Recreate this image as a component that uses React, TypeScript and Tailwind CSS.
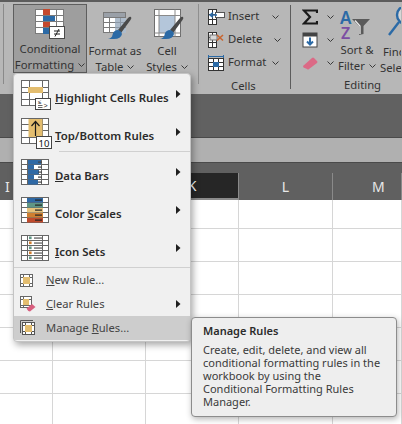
import type { ReactNode } from 'react'

const FONT = "font-['Noto_Sans','Open_Sans',sans-serif]"
const LINE = '#666666'

function Chevron() {
  return (
    <svg width="7" height="4" viewBox="0 0 7 4" fill="none" stroke="#3a3a3a" strokeWidth="1" className="inline-block">
      <path d="M0.5 0.5 L3.5 3.5 L6.5 0.5" />
    </svg>
  )
}

function Arrow({ className = '' }: { className?: string }) {
  return (
    <svg width="5" height="8" viewBox="0 0 5 8" className={`shrink-0 ${className}`} fill="#1f1f1f">
      <path d="M0 0 L4.5 4 L0 8 Z" />
    </svg>
  )
}

// table outline with inner rules, used by nearly every icon here
function Grid({ x, y, xs, ys, stroke = LINE }: { x: number[]; y: number[]; xs: number[]; ys: number[]; stroke?: string }) {
  const d = [
    ...xs.map((v) => `M${v} ${y[0]}V${y[1]}`),
    ...ys.map((v) => `M${x[0]} ${v}H${x[1]}`),
  ].join('')
  return (
    <>
      <rect x={x[0]} y={y[0]} width={x[1] - x[0]} height={y[1] - y[0]} fill="#fff" />
      <path d={d} stroke={stroke} strokeWidth="1" fill="none" />
      <rect x={x[0]} y={y[0]} width={x[1] - x[0]} height={y[1] - y[0]} fill="none" stroke={stroke} strokeWidth="1" />
    </>
  )
}

function Brush({ dx = 0, dy = 0 }: { dx?: number; dy?: number }) {
  return (
    <g transform={`translate(${dx} ${dy})`}>
      <path d="M16 18 L26 6 Q28 4 29 5 Q30 6 28.5 8 L19 21 Z" fill="#4a4a4a" />
      <path d="M15 18 Q19 18 20 22 Q19 27 12 27 L6 27 Q10 26 10.5 23 Q11 19 15 18 Z" fill="#2b6aa6" />
    </g>
  )
}

function CondIcon() {
  return (
    <svg width="32" height="32" viewBox="0 0 32 32">
      <Grid x={[1.5, 29.5]} y={[0.5, 24.5]} xs={[9.5, 15.5, 22.5]} ys={[6.5, 12.5, 18.5]} stroke="#7a7a7a" />
      <rect x="9" y="0" width="7" height="6" fill="#c4492e" />
      <rect x="9" y="7" width="12" height="5" fill="#2b6aa6" />
      <rect x="9" y="13" width="7" height="5" fill="#c4492e" />
      <rect x="9" y="19" width="7" height="6" fill="#2b6aa6" />
      <rect x="15.5" y="17.5" width="15" height="12" fill="#fff" stroke="#4a4a4a" />
      <path d="M20 22H26M20 25H26M25 20L21 27.5" stroke="#222" strokeWidth="1" fill="none" />
    </svg>
  )
}

function TableIcon() {
  return (
    <svg width="32" height="34" viewBox="0 0 32 34" className="overflow-visible">
      <Grid x={[4.5, 26.5]} y={[3.5, 23.5]} xs={[10.5, 16.5, 21.5]} ys={[8.5, 13.5, 18.5]} stroke="#7a7a7a" />
      <rect x="16" y="9" width="11" height="15" fill="#aebccb" />
      <rect x="5" y="4" width="21" height="4" fill="#9aa0a8" />
      <path d="M21.5 9V23M16 13.5H27M16 18.5H27" stroke="#8c98a6" />
      <Brush dx={3} dy={3} />
    </svg>
  )
}

function StyleIcon() {
  return (
    <svg width="32" height="34" viewBox="0 0 32 34" className="overflow-visible">
      <rect x="3.5" y="0.5" width="26" height="27" fill="#fff" stroke="#6e6e6e" />
      <rect x="8" y="7" width="16" height="17" fill="#b4c6da" />
      <path d="M3.5 6.5H29.5M8 0.5V27.5M24 0.5V27.5M3.5 24H29.5" stroke="#8a8a8a" fill="none" />
      <Brush dx={3} dy={3} />
    </svg>
  )
}

function RibbonButton({ lines, icon, className }: { lines: [string, string]; icon: ReactNode; className: string }) {
  return (
    <div className={`flex h-[69px] flex-col items-center text-[11.3px] leading-[16px] text-[#333] ${className}`}>
      <div className="flex h-[39px] w-full items-start justify-center pt-[4px]">{icon}</div>
      <span className="whitespace-nowrap">{lines[0]}</span>
      <span className="flex items-center gap-[4px] whitespace-nowrap">
        {lines[1]} <Chevron />
      </span>
    </div>
  )
}

function InsertIcon() {
  return (
    <svg width="17" height="16" viewBox="0 0 17 16">
      <Grid x={[0.5, 8.5]} y={[0.5, 15.5]} xs={[4.5]} ys={[5.5, 10.5]} stroke="#333" />
      <rect x="7.5" y="3.5" width="9" height="5" fill="#fff" stroke="#555" />
      <path d="M9 6H2M5 3.5L2 6L5 8.5" stroke="#2b6aa6" strokeWidth="1.5" fill="none" />
    </svg>
  )
}

function DeleteIcon() {
  return (
    <svg width="17" height="16" viewBox="0 0 17 16">
      <Grid x={[0.5, 8.5]} y={[0.5, 15.5]} xs={[4.5]} ys={[5.5, 10.5]} stroke="#333" />
      <rect x="2" y="3" width="7" height="5" fill="#d8d8d8" stroke="#777" />
      <path d="M9 3L15 8.5M15 3L9 8.5" stroke="#c9652f" strokeWidth="1.6" />
    </svg>
  )
}

function FormatIcon() {
  return (
    <svg width="17" height="16" viewBox="0 0 17 16">
      <path d="M0.5 0V3M15.5 0V3M1 1.5H15" stroke="#2b6aa6" fill="none" />
      <Grid x={[0.5, 15.5]} y={[3.5, 15.5]} xs={[5.5, 10.5]} ys={[7.5, 11.5]} stroke="#333" />
      <rect x="5" y="7" width="6" height="5" fill="#2b6aa6" />
    </svg>
  )
}

function CellsRow({ icon, label, chevron }: { icon: ReactNode; label: string; chevron: string }) {
  return (
    <div className="flex h-[23px] items-center gap-[3px]">
      {icon}
      <span className="whitespace-nowrap">{label}</span>
      <span className={`flex ${chevron}`}>
        <Chevron />
      </span>
    </div>
  )
}

function SortIcon() {
  return (
    <svg width="30" height="32" viewBox="0 0 30 32" className="overflow-visible">
      <text x="-2" y="15" fontSize="17" fontWeight="600" fill="#2b6aa6" fontFamily="'Noto Sans', sans-serif">A</text>
      <text x="-1" y="30" fontSize="16" fontWeight="600" fill="#7c4fa3" fontFamily="'Noto Sans', sans-serif">Z</text>
      <path d="M10 10 H28 L21.5 17 V25 L17 26 V17 Z" fill="#5a5a5a" />
      <path d="M13 11.5 L18 17 V25" stroke="#e8e8e8" strokeWidth="1.3" fill="none" />
    </svg>
  )
}

function HighlightIcon() {
  return (
    <svg width="32" height="38" viewBox="0 0 32 38">
      <Grid x={[0.5, 27.5]} y={[2.5, 27.5]} xs={[8.5, 21.5]} ys={[9.5, 14.5, 21.5]} />
      <rect x="7" y="9" width="15" height="6" fill="#e3bd6f" />
      <rect x="14.5" y="20.5" width="15" height="11" fill="#fff" stroke="#444" />
      <text x="17" y="25.5" fontSize="6" fill="#222" fontFamily="'Liberation Sans', sans-serif">≤</text>
      <text x="22.5" y="30" fontSize="7" fill="#222" fontFamily="'Liberation Sans', sans-serif">&gt;</text>
      <path d="M17 27.5H21.5M17 29.5H21.5" stroke="#222" strokeWidth="0.7" />
    </svg>
  )
}

function TopBottomIcon() {
  return (
    <svg width="32" height="38" viewBox="0 0 32 38">
      <Grid x={[0.5, 27.5]} y={[2.5, 27.5]} xs={[8.5, 21.5]} ys={[8.5, 14.5, 21.5]} />
      <rect x="7.5" y="3" width="14" height="18" fill="#e3bd6f" />
      <path d="M14.5 20V6M10.5 10L14.5 5.5L18.5 10" stroke="#1a1a1a" strokeWidth="1.2" fill="none" />
      <rect x="15.5" y="20.5" width="15" height="12" fill="#fff" stroke="#444" />
      <text x="23" y="30.5" textAnchor="middle" fontSize="9.5" fill="#111" fontFamily="'Noto Sans', sans-serif">10</text>
    </svg>
  )
}

function DataBarsIcon() {
  const bars = [13, 6, 11, 6, 10]
  return (
    <svg width="32" height="38" viewBox="0 0 32 38">
      <Grid x={[0.5, 27.5]} y={[3.5, 28.5]} xs={[6.5, 20.5]} ys={[8.5, 13.5, 18.5, 23.5]} />
      {bars.map((w, i) => (
        <g key={i}>
          <rect x="7" y={4 + i * 5} width={w} height="4.5" fill="#2f69a5" />
          <rect x="17" y={5.5 + i * 5} width="4" height="1.2" fill="#444" />
        </g>
      ))}
    </svg>
  )
}

function ColorScalesIcon() {
  const colors = ['#2f69a5', '#5f9685', '#e6c179', '#cf7e30', '#c04a2c']
  return (
    <svg width="32" height="38" viewBox="0 0 32 38">
      <Grid x={[0.5, 27.5]} y={[3.5, 28.5]} xs={[6.5, 21.5]} ys={[8.5, 13.5, 18.5, 23.5]} />
      {colors.map((c, i) => (
        <g key={i}>
          <rect x="6" y={4 + i * 5} width="16" height="4.5" fill={c} />
          <rect x="14" y={5.5 + i * 5} width="7" height="1.2" fill="#222" />
        </g>
      ))}
    </svg>
  )
}

function IconSetsIcon() {
  const colors = ['#5f9685', '#cf7e30', '#5f9685', '#cf7e30', '#5f9685']
  return (
    <svg width="32" height="38" viewBox="0 0 32 38">
      <Grid x={[0.5, 27.5]} y={[3.5, 28.5]} xs={[6.5, 21.5]} ys={[8.5, 13.5, 18.5, 23.5]} />
      {colors.map((c, i) => (
        <g key={i}>
          <rect x="8" y={4.5 + i * 5} width="2.6" height="2.6" fill={c} />
          <rect x="13" y={5.5 + i * 5} width="8" height="1.1" fill="#444" />
        </g>
      ))}
    </svg>
  )
}

function NewRuleIcon() {
  return (
    <svg width="16" height="16" viewBox="0 0 16 16">
      <Grid x={[0.5, 12.5]} y={[2.5, 14.5]} xs={[3.5, 9.5]} ys={[5.5, 11.5]} />
      <rect x="3" y="5" width="7" height="7" fill="#e3bd6f" />
    </svg>
  )
}

function ClearRulesIcon() {
  return (
    <svg width="16" height="16" viewBox="0 0 16 16">
      <Grid x={[0.5, 11.5]} y={[0.5, 11.5]} xs={[3.5]} ys={[3.5, 9.5]} />
      <rect x="3" y="3" width="6" height="6" fill="#e3bd6f" />
      <path d="M6.5 12.5 L12 8 L15.5 11 L10 15.5 Q8 15.5 6.5 12.5 Z" fill="#d95f7f" />
    </svg>
  )
}

function ManageRulesIcon() {
  return (
    <svg width="16" height="16" viewBox="0 0 16 16">
      <path d="M0.5 0.5H13M0.5 0.5V13" stroke="#555" fill="none" />
      <Grid x={[2.5, 14.5]} y={[2.5, 14.5]} xs={[5.5, 11.5]} ys={[5.5, 11.5]} stroke="#555" />
      <rect x="5" y="5" width="7" height="7" fill="#e3bd6f" />
    </svg>
  )
}

function BigItem({ icon, children }: { icon: ReactNode; children: ReactNode }) {
  return (
    <div className="flex h-[38px] items-center pl-[7px] pr-[9px]">
      <div className="w-[34px] shrink-0">{icon}</div>
      <span className="flex-1 translate-y-[1px] whitespace-nowrap text-[11.4px] font-semibold text-[#2b2b2b]">{children}</span>
      <Arrow className="-translate-y-[3px]" />
    </div>
  )
}

function SmallItem({ icon, children, arrow, active }: { icon: ReactNode; children: ReactNode; arrow?: boolean; active?: boolean }) {
  return (
    <div className={`flex h-[24px] items-center pl-[6px] pr-[9px] ${active ? 'bg-[#cdcdcd]' : ''}`}>
      <div className="w-[26px] shrink-0">{icon}</div>
      <span className="flex-1 whitespace-nowrap text-[11.2px] text-[#444]">{children}</span>
      {arrow && <Arrow />}
    </div>
  )
}

const COLS = [
  { label: 'I', w: 'w-[53px]', cls: 'justify-start pl-[5px] text-[#e8e8e8]' },
  { label: '', w: 'w-[93px]', cls: '' },
  { label: 'K', w: 'w-[93px]', cls: 'justify-center bg-[#262626] text-white border-b-2 border-[#1f6a4a]' },
  { label: 'L', w: 'w-[94px]', cls: 'justify-center text-[#e8e8e8]' },
  { label: 'M', w: 'w-[69px]', cls: 'justify-start pl-[39px] text-[#e8e8e8]' },
]

const SHEET_COLS = ['w-[53px]', 'w-[93px]', 'w-[93px]', 'w-[94px]', 'w-[69px]']
const ROW_HEIGHTS = ['h-[29px]', 'h-[33px]', 'h-[33px]', 'h-[33px]', 'h-[33px]', 'h-[33px]', 'h-[33px]']

export default function App() {
  return (
    <div className={`relative h-[424px] w-[402px] overflow-hidden bg-white ${FONT}`}>
      {/* Ribbon */}
      <div className="flex h-[94px] border-t-2 border-[#5c5c5c] bg-[#b7b7b7] text-[11.3px] text-[#333]">
        <div className="ml-[3px] mt-[2px] h-[80px] w-px bg-[#8a8a8a]" />
        <div className="ml-[9px] mt-[2px]">
          <RibbonButton
            lines={['Conditional', 'Formatting']}
            icon={<CondIcon />}
            className="w-[74px] border border-[#5e5e5e] bg-[#9e9e9e]"
          />
        </div>
        <div className="mt-[3px]">
          <RibbonButton lines={['Format as', 'Table']} icon={<TableIcon />} className="w-[56px]" />
        </div>
        <div className="mt-[3px]">
          <RibbonButton lines={['Cell', 'Styles']} icon={<StyleIcon />} className="w-[48px]" />
        </div>
        <div className="ml-[7px] mt-[2px] h-[80px] w-px bg-[#8f8f8f]" />

        <div className="flex w-[91px] flex-col pl-[9px] pt-[3px]">
          <CellsRow icon={<InsertIcon />} label="Insert" chevron="ml-[10px]" />
          <CellsRow icon={<DeleteIcon />} label="Delete" chevron="ml-[9px]" />
          <CellsRow icon={<FormatIcon />} label="Format" chevron="ml-[3px]" />
          <span className="mt-[4px] pl-[23px] leading-[16px]">Cells</span>
        </div>
        <div className="mt-[3px] h-[84px] w-px bg-[#5c5c5c]" />

        <div className="flex flex-col">
          <div className="flex">
            <div className="flex w-[43px] flex-col pl-[11px] pt-[3px]">
              <div className="flex h-[23px] items-center gap-[9px]">
                <svg width="16" height="16" viewBox="0 0 16 16" fill="none" stroke="#1a1a1a" strokeWidth="2.2">
                  <path d="M15 4V1.5H2L8 8L2 14.5H15V12" />
                </svg>
                <Chevron />
              </div>
              <div className="flex h-[23px] items-center gap-[9px]">
                <svg width="16" height="16" viewBox="0 0 16 16">
                  <rect x="1" y="1" width="14" height="14" fill="#fff" stroke="#444" />
                  <rect x="1" y="1" width="14" height="3.5" fill="#444" />
                  <path d="M8 5.5V12.5M5 9.5L8 12.5L11 9.5" stroke="#2b6aa6" strokeWidth="2" fill="none" />
                </svg>
                <Chevron />
              </div>
              <div className="flex h-[23px] items-center gap-[9px]">
                <svg width="16" height="16" viewBox="0 0 16 16">
                  <path d="M1 11 L10 3 Q11 2 12 3 L15 6 Q16 7 15 8 L7 14 Q6 15 5 14 L1.5 12.5 Z" fill="#db6a86" />
                </svg>
                <Chevron />
              </div>
            </div>
            <div className="mt-[3px]">
              <RibbonButton lines={['Sort &', 'Filter']} icon={<SortIcon />} className="w-[46px]" />
            </div>
            <div className="mt-[3px] w-[21px] overflow-hidden whitespace-nowrap leading-[16px]">
              <div className="h-[39px] pl-[5px] pt-[2px]">
                <svg width="24" height="30" viewBox="0 0 24 30" fill="none" stroke="#2b6aa6" strokeWidth="2.4">
                  <circle cx="21" cy="8" r="9" fill="#d6d6d6" />
                  <path d="M14 15L4 28" />
                </svg>
              </div>
              <div className="pl-[3px]">Find &amp;</div>
              <div>Select</div>
            </div>
          </div>
          <span className="mt-[1px] pl-[53px] leading-[16px]">Editing</span>
        </div>
      </div>

      {/* Dark band and formula bar */}
      <div className="h-[44px] border-b border-[#4a4a4a] bg-[#616161]" />
      <div className="h-[24px] bg-[#b0b0b0]" />
      <div className="flex h-[38px] items-end border-t border-[#4a4a4a] bg-[#606060]">
        {COLS.map((c, i) => (
          <div
            key={i}
            className={`flex h-[27px] items-center border-r border-[#8a8a8a] text-[14px] ${c.w} ${c.cls}`}
          >
            {c.label}
          </div>
        ))}
      </div>

      {/* Sheet */}
      <div className="flex flex-col">
        {ROW_HEIGHTS.map((h, r) => (
          <div key={r} className={`flex border-b border-[#d6d6d6] ${h}`}>
            {SHEET_COLS.map((w, c) => (
              <div key={c} className={`border-r border-[#d6d6d6] ${w}`} />
            ))}
          </div>
        ))}
      </div>

      {/* Conditional Formatting menu */}
      <div className="absolute left-[13px] top-[73px] w-[178px] rounded-[4px] border border-[#c4c4c4] bg-[#f0f0f0] pb-px pt-[4px] shadow-[2px_3px_7px_rgba(0,0,0,0.35)]">
        <BigItem icon={<HighlightIcon />}>
          <span className="underline">H</span>ighlight Cells Rules
        </BigItem>
        <BigItem icon={<TopBottomIcon />}>
          <span className="underline">T</span>op/Bottom Rules
        </BigItem>
        <div className="mb-[4px] ml-[45px] mt-[-3px] h-px bg-[#d0d0d0]" />
        <BigItem icon={<DataBarsIcon />}>
          <span className="underline">D</span>ata Bars
        </BigItem>
        <BigItem icon={<ColorScalesIcon />}>
          Color <span className="underline">S</span>cales
        </BigItem>
        <BigItem icon={<IconSetsIcon />}>
          <span className="underline">I</span>con Sets
        </BigItem>
        <div className="mt-[-3px] h-px bg-[#d0d0d0]" />
        <SmallItem icon={<NewRuleIcon />}>
          <span className="underline">N</span>ew Rule...
        </SmallItem>
        <SmallItem icon={<ClearRulesIcon />} arrow>
          <span className="underline">C</span>lear Rules
        </SmallItem>
        <SmallItem icon={<ManageRulesIcon />} active>
          Manage <span className="underline">R</span>ules...
        </SmallItem>
      </div>

      {/* Tooltip */}
      <div className="absolute left-[191px] top-[317px] h-[100px] w-[206px] rounded-[4px] border border-[#8c8c8c] bg-[#eeeeee] pl-[11px] pt-[6px] text-[11px] leading-[13px] text-[#3a3a3a] shadow-[1px_2px_6px_rgba(0,0,0,0.3)]">
        <div className="font-semibold text-[#2b2b2b]">Manage Rules</div>
        <div className="mt-[6px]">
          Create, edit, delete, and view all
          <br />
          conditional formatting rules in the
          <br />
          workbook by using the
          <br />
          Conditional Formatting Rules
          <br />
          Manager.
        </div>
      </div>
    </div>
  )
}
